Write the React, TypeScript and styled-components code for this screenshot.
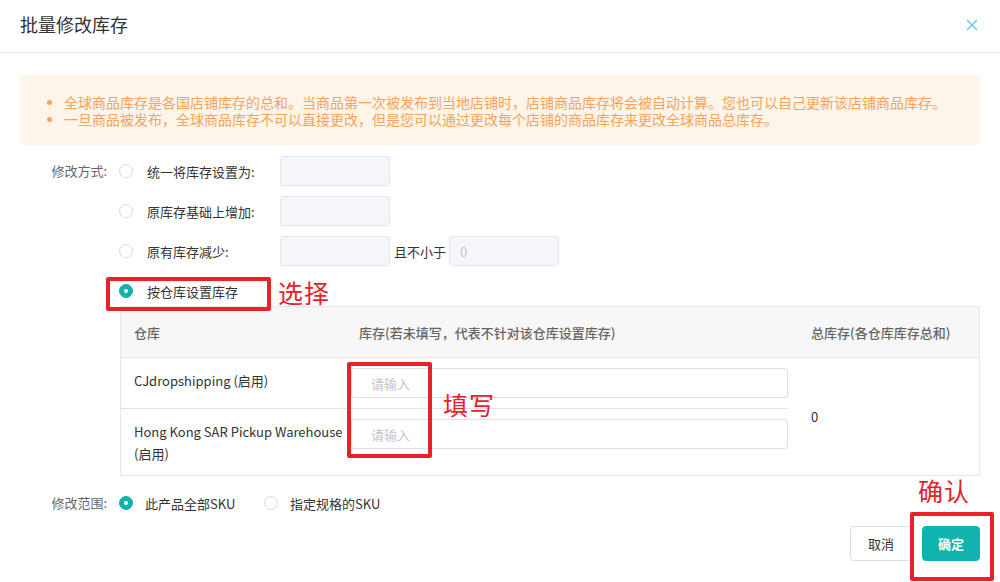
import React from 'react'
import styled, { createGlobalStyle } from 'styled-components'

const GlobalStyle = createGlobalStyle`
  html, body {
    margin: 0;
    padding: 0;
    background: #fff;
  }
  body {
    font-family: 'Noto Sans CJK SC', 'Noto Sans', sans-serif;
    color: #333;
    font-size: 13px;
  }
`

const Modal = styled.div`
  position: relative;
  width: 1000px;
  height: 582px;
  background: #fff;
  overflow: hidden;
`

const Header = styled.div`
  height: 52px;
  padding: 0 22px 0 20px;
  display: flex;
  align-items: center;
  justify-content: space-between;
  border-bottom: 1px solid #e3e4e8;
`

const Title = styled.div`
  font-size: 18px;
  color: #333;
  line-height: 1;
  margin-top: -4px;
`

const CloseButton = styled.button`
  border: none;
  background: none;
  padding: 0;
  display: flex;
  cursor: pointer;
  margin-top: -2px;
`

const Body = styled.div`
  padding: 22px 20px 0 20px;
`

const Alert = styled.ul`
  margin: 0;
  padding: 19px 20px 17px 44px;
  background: #fdf4ea;
  border-radius: 4px;
  color: #f7a35c;
  font-size: 14px;
  line-height: 17px;
  list-style: none;
`

const AlertItem = styled.li`
  position: relative;
  &::before {
    content: '';
    position: absolute;
    left: -17px;
    top: 6px;
    width: 5px;
    height: 5px;
    border-radius: 50%;
    background: #f7a35c;
  }
`

const FormGrid = styled.div<{ $top?: number }>`
  margin-top: ${({ $top }) => $top ?? 0}px;
  display: grid;
  grid-template-columns: 87px 1fr;
  column-gap: 12px;
`

const FieldLabel = styled.div`
  text-align: right;
  color: #666;
  line-height: 30px;
  font-size: 13px;
`

const Options = styled.div`
  display: flex;
  flex-direction: column;
  gap: 10px;
`

const OptionRow = styled.div`
  display: flex;
  align-items: center;
  height: 30px;
`

const Radio = styled.span<{ $checked?: boolean }>`
  box-sizing: border-box;
  width: 14px;
  height: 14px;
  border-radius: 50%;
  flex: none;
  border: 1px solid ${({ $checked }) => ($checked ? '#12b2ab' : '#d9dadf')};
  background: ${({ $checked }) => ($checked ? '#12b2ab' : '#fff')};
  display: flex;
  align-items: center;
  justify-content: center;
  &::after {
    content: '';
    display: ${({ $checked }) => ($checked ? 'block' : 'none')};
    width: 4px;
    height: 4px;
    border-radius: 50%;
    background: #fff;
  }
`

const OptionText = styled.span<{ $width?: number }>`
  margin-left: 14px;
  width: ${({ $width }) => ($width ? `${$width}px` : 'auto')};
  color: #333;
  font-size: 13px;
`

const TextInput = styled.input<{ $width?: number }>`
  box-sizing: border-box;
  width: ${({ $width }) => ($width ? `${$width}px` : '100%')};
  height: 30px;
  border: 1px solid #e4e6ee;
  border-radius: 3px;
  background: #f5f6fa;
  padding: 0 10px;
  font-family: inherit;
  font-size: 13px;
  color: #333;
  outline: none;
  &::placeholder {
    color: #c3c5cc;
  }
`

const PlainInput = styled(TextInput)`
  display: block;
  background: #fff;
  border-color: #dfe0e6;
  padding-left: 19px;
`

const Between = styled.span`
  margin: 0 3px 0 4px;
  color: #333;
`

const Table = styled.div`
  margin-left: 1px;
  border: 1px solid #e6e7eb;
  display: grid;
  grid-template-columns: 225px 442px 1fr;
`

const HeadCell = styled.div<{ $pad?: number }>`
  background: #f7f7f7;
  height: 50px;
  display: flex;
  align-items: center;
  padding-left: ${({ $pad }) => $pad ?? 13}px;
  color: #666;
  font-weight: 500;
  font-size: 13px;
  border-bottom: 1px solid #e6e7eb;
`

const Cell = styled.div<{ $divider?: boolean; $input?: boolean }>`
  padding: ${({ $input }) => ($input ? '10px 0 10px 5px' : '12px 0 10px 13px')};
  line-height: 22px;
  color: #333;
  font-size: 13px;
  border-bottom: ${({ $divider }) => ($divider ? '1px solid #e1e2e6' : 'none')};
`

const TotalCell = styled.div`
  grid-column: 3;
  grid-row: 2 / span 2;
  display: flex;
  align-items: center;
  padding-left: 23px;
  color: #333;
`

const ScopeOptions = styled.div`
  display: flex;
  align-items: center;
  height: 30px;
`

const ScopeOption = styled.label`
  display: flex;
  align-items: center;
  gap: 12px;
  width: 145px;
  color: #333;
  font-size: 13px;
`

const Footer = styled.div`
  margin-top: 8px;
  display: flex;
  justify-content: flex-end;
  gap: 10px;
`

const Button = styled.button<{ $primary?: boolean }>`
  box-sizing: border-box;
  height: 35px;
  padding: 0 ${({ $primary }) => ($primary ? 15 : 17)}px;
  border-radius: 4px;
  font-family: inherit;
  font-size: 13px;
  font-weight: ${({ $primary }) => ($primary ? 700 : 400)};
  border: 1px solid ${({ $primary }) => ($primary ? '#10b3ad' : '#dcdde2')};
  background: ${({ $primary }) => ($primary ? '#10b3ad' : '#fff')};
  color: ${({ $primary }) => ($primary ? '#fff' : '#333')};
  cursor: pointer;
`

// red annotation frames drawn over the dialog
const Mark = styled.div<{ $left: number; $top: number; $width: number; $height: number }>`
  position: absolute;
  left: ${({ $left }) => $left}px;
  top: ${({ $top }) => $top}px;
  width: ${({ $width }) => $width}px;
  height: ${({ $height }) => $height}px;
  box-sizing: border-box;
  border: 4px solid #e8212b;
  border-radius: 2px;
  pointer-events: none;
`

const MarkNote = styled.div<{ $left: number; $top: number }>`
  position: absolute;
  left: ${({ $left }) => $left}px;
  top: ${({ $top }) => $top}px;
  color: #e8212b;
  font-size: 25px;
  line-height: 1;
  letter-spacing: 1px;
  pointer-events: none;
`

const warehouses = [
  { name: 'CJdropshipping (启用)' },
  { name: 'Hong Kong SAR Pickup Warehouse (启用)' }
]

export default function App() {
  return (
    <Modal>
      <GlobalStyle />
      <Header>
        <Title>批量修改库存</Title>
        <CloseButton aria-label="close">
          <svg width="12" height="12" viewBox="0 0 12 12">
            <path d="M1 1L11 11M11 1L1 11" stroke="#5cc4e8" strokeWidth="1.3" />
          </svg>
        </CloseButton>
      </Header>
      <Body>
        <Alert>
          <AlertItem>
            全球商品库存是各国店铺库存的总和。当商品第一次被发布到当地店铺时，店铺商品库存将会被自动计算。您也可以自己更新该店铺商品库存。
          </AlertItem>
          <AlertItem>
            一旦商品被发布，全球商品库存不可以直接更改，但是您可以通过更改每个店铺的商品库存来更改全球商品总库存。
          </AlertItem>
        </Alert>
        <FormGrid $top={11}>
          <FieldLabel>修改方式:</FieldLabel>
          <Options>
            <OptionRow>
              <Radio />
              <OptionText $width={133}>统一将库存设置为:</OptionText>
              <TextInput $width={110} />
            </OptionRow>
            <OptionRow>
              <Radio />
              <OptionText $width={133}>原库存基础上增加:</OptionText>
              <TextInput $width={110} />
            </OptionRow>
            <OptionRow>
              <Radio />
              <OptionText $width={133}>原有库存减少:</OptionText>
              <TextInput $width={110} />
              <Between>且不小于</Between>
              <TextInput $width={110} placeholder="0" />
            </OptionRow>
            <OptionRow>
              <Radio $checked />
              <OptionText>按仓库设置库存</OptionText>
            </OptionRow>
          </Options>
        </FormGrid>
        <FormGrid>
          <div />
          <Table>
            <HeadCell>仓库</HeadCell>
            <HeadCell>库存(若未填写，代表不针对该仓库设置库存)</HeadCell>
            <HeadCell $pad={23}>总库存(各仓库库存总和)</HeadCell>
            {warehouses.map((w, i) => (
              <React.Fragment key={w.name}>
                <Cell $divider={i === 0} style={{ gridRow: i + 2 }}>
                  {w.name}
                </Cell>
                <Cell $divider={i === 0} $input style={{ gridRow: i + 2 }}>
                  <PlainInput placeholder="请输入" />
                </Cell>
              </React.Fragment>
            ))}
            <TotalCell>0</TotalCell>
          </Table>
        </FormGrid>
        <FormGrid $top={12}>
          <FieldLabel>修改范围:</FieldLabel>
          <ScopeOptions>
            <ScopeOption>
              <Radio $checked />
              此产品全部SKU
            </ScopeOption>
            <ScopeOption>
              <Radio />
              指定规格的SKU
            </ScopeOption>
          </ScopeOptions>
        </FormGrid>
        <Footer>
          <Button>取消</Button>
          <Button $primary>确定</Button>
        </Footer>
      </Body>

      <Mark $left={106} $top={277} $width={165} $height={34} />
      <MarkNote $left={278} $top={280}>选择</MarkNote>
      <Mark $left={347} $top={362} $width={85} $height={96} />
      <MarkNote $left={443} $top={392}>填写</MarkNote>
      <Mark $left={910} $top={512} $width={84} $height={69} />
      <MarkNote $left={918} $top={478}>确认</MarkNote>
    </Modal>
  )
}
